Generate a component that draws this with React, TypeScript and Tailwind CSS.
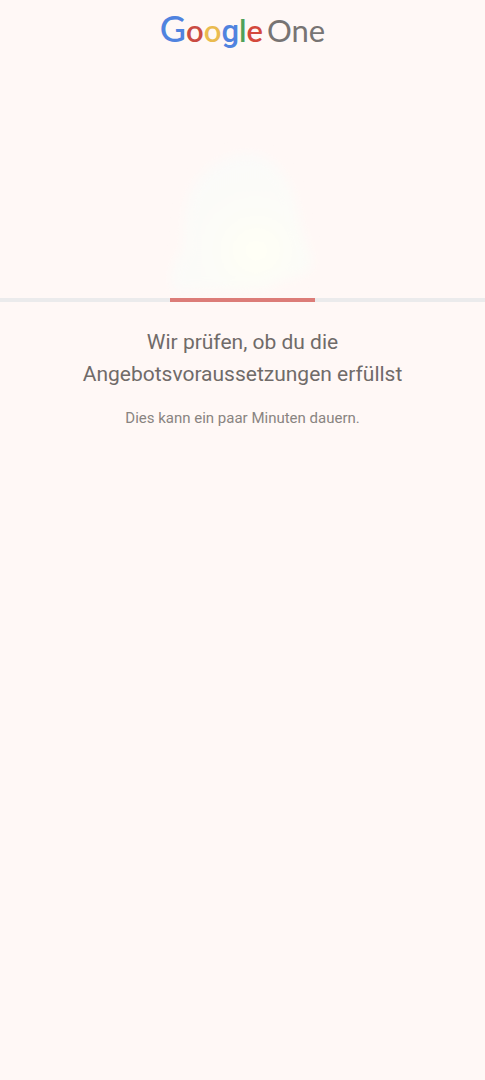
function Logo() {
  return (
    <h1 className="flex h-12 items-baseline justify-center gap-1 font-['Lato',sans-serif] whitespace-nowrap">
      <span className="text-[31px] leading-12 font-semibold">
        <span className="text-[36px] font-medium text-[#5083df]">G</span>
        <span className="text-[#ca4b43]">o</span>
        <span className="text-[#eabb4f]">o</span>
        <span className="font-['Roboto',sans-serif] font-medium text-[#5083df]">g</span>
        <span className="text-[#4fa15a]">l</span>
        <span className="text-[#d4483c]">e</span>
      </span>
      <span className="text-[31px] leading-12 text-[#777473]">One</span>
    </h1>
  );
}

function Glow() {
  return (
    <svg viewBox="0 0 160 160" className="mx-auto size-40" aria-hidden="true">
      <defs>
        <filter id="soft" x="-20%" y="-20%" width="140%" height="140%">
          <feGaussianBlur stdDeviation="6" />
        </filter>
        <radialGradient id="tint" cx="60%" cy="70%" r="75%">
          <stop offset="0%" stopColor="#fffff5" />
          <stop offset="45%" stopColor="#fcfcf8" />
          <stop offset="100%" stopColor="#fbfaf9" />
        </radialGradient>
      </defs>
      <path
        d="M76 14C108 8 126 36 134 66C137 92 148 110 150 126C140 140 116 138 104 150L12 152C4 138 10 120 20 110C22 84 14 30 76 14Z"
        fill="url(#tint)"
        filter="url(#soft)"
      />
    </svg>
  );
}

export default function App() {
  return (
    <main className="min-h-screen bg-[#fff8f6] pt-1 text-center font-['Roboto',sans-serif]">
      <Logo />
      <div className="pt-22">
        <Glow />
      </div>
      <div
        role="progressbar"
        aria-labelledby="status"
        className="-mt-0.5 flex h-1 justify-center bg-[#ebebec]"
      >
        <div className="w-[30%] bg-[#dc7c78]" />
      </div>
      <section className="px-10 pt-6">
        <h2 id="status" className="text-[21px] leading-8 text-[#706b69]">
          Wir prüfen, ob du die
          <br />
          Angebotsvoraussetzungen erfüllst
        </h2>
        <p className="mt-4 text-[15px] leading-6 text-[#898481]">
          Dies kann ein paar Minuten dauern.
        </p>
      </section>
    </main>
  );
}
